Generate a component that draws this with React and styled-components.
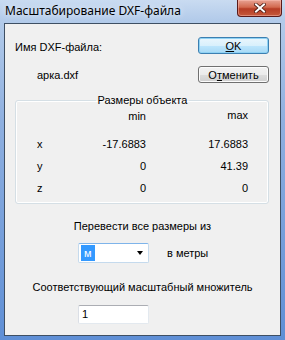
import React from 'react'
import styled, { createGlobalStyle } from 'styled-components';

const Global = createGlobalStyle`
  html, body {
    margin: 0;
    padding: 0;
    background: #fff;
  }
  * { box-sizing: border-box; }
`;

const Window = styled.div`
  width: 285px;
  height: 340px;
  display: flex;
  flex-direction: column;
  background: linear-gradient(180deg, #c9dbf1 0%, #b3cbea 20px, #8fb0e0 120px, #5f8fd6 100%);
  font-family: "Liberation Sans", Arial, sans-serif;
  font-size: 11px;
  color: #000;
`;

const TitleBar = styled.div`
  height: 23px;
  display: flex;
  justify-content: space-between;
  align-items: flex-start;
  padding: 0 3px 0 5px;
  flex-shrink: 0;
`;

const Caption = styled.span`
  font-family: "Noto Sans", "Open Sans", sans-serif;
  font-size: 12px;
  line-height: 22px;
  color: #000;
  text-shadow: 0 0 6px rgba(255,255,255,0.9);
`;

const CloseButton = styled.div`
  width: 45px;
  height: 17px;
  border: 1px solid #5a1a1a;
  border-top: none;
  border-radius: 0 0 4px 4px;
  background: linear-gradient(180deg, #e8a293 0%, #d2694f 45%, #b63c25 55%, #c55a3c 100%);
  box-shadow: inset 0 0 0 1px rgba(255,200,190,0.45);
  display: flex;
  align-items: center;
  justify-content: center;
`;

const Client = styled.div`
  flex: 1;
  margin: 0 4px 4px 4px;
  border: 1px solid #3e4f63;
  background: #f0f0f0;
  display: flex;
  flex-direction: column;
`;

const TopRow = styled.div`
  display: flex;
  justify-content: space-between;
  padding: 13px 11px 0 10px;
`;

const FileInfo = styled.div`
  display: flex;
  flex-direction: column;
`;

const Label = styled.div`
  line-height: 14px;
  padding-left: ${({indent}) => indent || 0}px;
  margin-top: ${({top}) => top || 0}px;
`;

const Buttons = styled.div`
  display: flex;
  flex-direction: column;
  gap: 12px;
`;

const Button = styled.button`
  width: 71px;
  height: 17px;
  padding: 0;
  font-family: "Liberation Sans", Arial, sans-serif;
  font-size: 11px;
  color: #000;
  border-radius: 3px;
  border: 1px solid ${({primary}) => primary ? '#3c7fb1' : '#707070'};
  background: ${({primary}) => primary
    ? 'linear-gradient(180deg, #eaf6fd 0%, #d9f0fc 50%, #bee6fd 51%, #a7d9f5 100%)'
    : 'linear-gradient(180deg, #f2f2f2 0%, #ebebeb 50%, #dddddd 51%, #cfcfcf 100%)'};
  box-shadow: ${({primary}) => primary ? 'inset 0 0 0 1px #8fd2f4' : 'inset 0 0 0 1px #fcfcfc'};

  u { text-decoration: underline; }
`;

const Group = styled.fieldset`
  margin: 10px 11px 0 10px;
  padding: 0 20px 0 21px;
  border: 1px solid #d5dfe5;
  border-radius: 3px;
  box-shadow: inset 0 0 0 1px #fff;
  min-width: 0;
`;

const Legend = styled.legend`
  margin: 0 auto;
  padding: 0 2px;
  line-height: 14px;
`;

const Table = styled.div`
  display: grid;
  grid-template-columns: 30px 79px 102px;
  grid-template-rows: 26px repeat(3, 22px);
  align-items: center;
  padding-bottom: 4px;
`;

const Cell = styled.div`
  text-align: ${({left}) => left ? 'left' : 'right'};
  line-height: 14px;
`;

const HeadCell = styled(Cell)`
  align-self: start;
  margin-top: ${({high}) => high ? 1 : 2}px;
`;

const Bottom = styled.div`
  display: flex;
  flex-direction: column;
  padding-top: 15px;
`;

const Centered = styled.div`
  text-align: center;
  line-height: 14px;
  margin-top: ${({top}) => top || 0}px;
`;

const UnitRow = styled.div`
  display: flex;
  align-items: center;
  gap: 18px;
  padding-left: 73px;
  margin-top: 10px;
`;

const Combo = styled.div`
  width: 71px;
  height: 20px;
  background: #fff;
  border: 1px solid #c5daed;
  border-top-color: #7eb4ea;
  border-radius: 2px;
  display: flex;
  align-items: center;
  justify-content: space-between;
  padding: 0 5px 0 2px;
`;

const Selected = styled.span`
  background: #3399ff;
  color: #fff;
  line-height: 16px;
  padding: 0 3px;
`;

const Arrow = styled.span`
  width: 0;
  height: 0;
  border-left: 3.5px solid transparent;
  border-right: 3.5px solid transparent;
  border-top: 4px solid #000;
`;

const TextBox = styled.div`
  width: 71px;
  height: 19px;
  margin: 11px 0 0 73px;
  background: #fff;
  border: 1px solid #e3e9ef;
  border-top-color: #abadb3;
  border-left-color: #dbdfe6;
  border-radius: 2px;
  padding: 0 3px;
  line-height: 17px;
`;

const rows = [
  ['x', '-17.6883', '17.6883'],
  ['y', '0', '41.39'],
  ['z', '0', '0'],
];

export default function App() {
  return (
    <>
      <Global />
      <Window>
        <TitleBar>
          <Caption>Масштабирование DXF-файла</Caption>
          <CloseButton>
            <svg width="12" height="10" viewBox="0 0 12 10">
              <path d="M2 1.5 L10 8.5 M10 1.5 L2 8.5" stroke="#4a1810" strokeWidth="3.6" strokeLinecap="square" />
              <path d="M2 1.5 L10 8.5 M10 1.5 L2 8.5" stroke="#fff" strokeWidth="2" strokeLinecap="square" />
            </svg>
          </CloseButton>
        </TitleBar>
        <Client>
          <TopRow>
            <FileInfo>
              <Label top={3}>Имя DXF-файла:</Label>
              <Label top={14} indent={22}>арка.dxf</Label>
            </FileInfo>
            <Buttons>
              <Button primary><u>O</u>K</Button>
              <Button>О<u>т</u>менить</Button>
            </Buttons>
          </TopRow>
          <Group>
            <Legend>Размеры объекта</Legend>
            <Table>
              <HeadCell left />
              <HeadCell>min</HeadCell>
              <HeadCell high>max</HeadCell>
              {rows.map(r => (
                <React.Fragment key={r[0]}>
                  <Cell left>{r[0]}</Cell>
                  <Cell>{r[1]}</Cell>
                  <Cell>{r[2]}</Cell>
                </React.Fragment>
              ))}
            </Table>
          </Group>
          <Bottom>
            <Centered>Перевести все размеры из</Centered>
            <UnitRow>
              <Combo>
                <Selected>м</Selected>
                <Arrow />
              </Combo>
              <span>в метры</span>
            </UnitRow>
            <Centered top={17}>Соответствующий масштабный множитель</Centered>
            <TextBox>1</TextBox>
          </Bottom>
        </Client>
      </Window>
    </>
  )
}
